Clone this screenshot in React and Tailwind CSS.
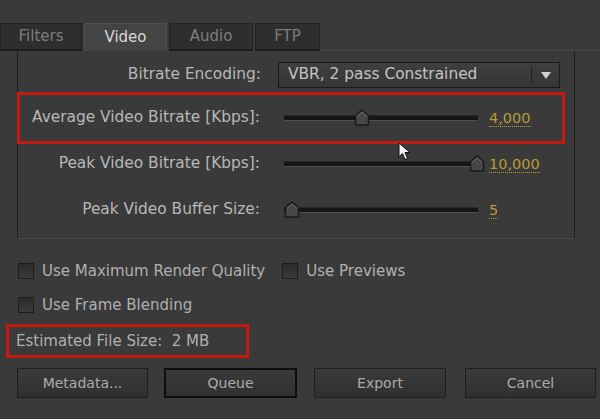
import React from 'react';

const font = { fontFamily: '"DejaVu Sans", "Liberation Sans", sans-serif' };

const tabs = [
  { name: 'Filters', w: 'w-[82px]' },
  { name: 'Video', w: 'w-[83px]', active: true },
  { name: 'Audio', w: 'w-[84px]' },
  { name: 'FTP', w: 'w-[65px]' },
];

// pentagon-shaped slider handle
const Thumb = () => (
  <svg width="16" height="18" viewBox="0 0 16 18" className="absolute top-1/2 -translate-y-1/2 -translate-x-1/2">
    <path d="M1.5 6.5 L8 1 L14.5 6.5 L14.5 16 L1.5 16 Z" fill="#474747" stroke="#1a1a1a" strokeWidth="1.5" />
    <path d="M3 7.5 L8 3.2 L13 7.5" fill="none" stroke="#666" strokeWidth="1" />
  </svg>
);

const Slider = ({ pos }) => (
  <div className="relative w-[194px] h-[16px] flex items-center">
    <div className="w-full h-[6px] bg-[#151515] border-y border-t-[#262626] border-b-[#505050] rounded-[1px]" />
    <div className="absolute top-0 bottom-0" style={{ left: `${pos}px` }}>
      <Thumb />
    </div>
  </div>
);

const Value = ({ children }) => (
  <span className="text-[#b89a36] text-[14.5px] border-b border-dotted border-[#b89a36] leading-[17px]">{children}</span>
);

const SliderRow = ({ label, pos, value, boxed, h }) => (
  <div
    className={`flex items-center ${h} ${boxed ? 'border-[3px] border-[#c41a10] w-[548px] -ml-px' : ''}`}
  >
    <div className={`${boxed ? 'w-[240px]' : 'w-[242px]'} text-right text-[#b8b8b8] text-[15.4px] whitespace-nowrap`}>{label}</div>
    <div className="ml-[24px]">
      <Slider pos={pos} />
    </div>
    <div className="ml-[11px]">
      <Value>{value}</Value>
    </div>
  </div>
);

const Checkbox = ({ label }) => (
  <div className="flex items-center gap-[8px]">
    <div className="w-[16px] h-[16px] border border-[#1d1d1d] bg-gradient-to-b from-[#2c2c2c] to-[#3a3a3a]" />
    <span className="text-[#b0b0b0] text-[15px]">{label}</span>
  </div>
);

const Button = ({ children, focused, w }) => (
  <button
    className={`${w} h-[30px] text-[14px] text-[#ababab] bg-gradient-to-b from-[#3a3a3a] to-[#303030] border ${
      focused ? 'border-[#0e0e0e] border-2' : 'border-[#1e1e1e]'
    }`}
  >
    {children}
  </button>
);

export default function App() {
  return (
    <div className="relative w-[600px] h-[419px] bg-[#3a3a3a] overflow-hidden select-none" style={font}>
      {/* top strip */}
      <div className="h-[23px]" />

      {/* tabs */}
      <div className="flex h-[28px] items-end">
        {tabs.map((t, i) => (
          <div
            key={t.name}
            className={`${t.w} h-[28px] flex items-center justify-center text-[15px] ${i > 0 ? 'ml-[2px]' : ''} ${
              t.active
                ? 'bg-[#444444] text-[#d8d8d8] border-t border-x border-[#505050]'
                : 'bg-[#2e2e2e] text-[#7d7d7d] border-t border-x border-b-2 border-[#232323] border-b-[#1c1c1c]'
            }`}
          >
            {t.name}
          </div>
        ))}
        <div className="flex-1 h-[28px] border-b border-[#4a4a4a]" />
      </div>

      {/* video settings panel */}
      <div className="ml-[17px] w-[558px] h-[188px] border-l border-r border-[#1e1e1e] border-b border-b-[#4a4a4a] pt-[11px] flex flex-col">
        <div className="flex items-center h-[26px]">
          <div className="w-[243px] text-right text-[#b8b8b8] text-[15.4px]">Bitrate Encoding:</div>
          <div className="ml-[17px] w-[282px] h-[26px] flex items-center border border-[#1a1a1a] bg-gradient-to-b from-[#3f3f3f] to-[#353535]">
            <span className="flex-1 pl-[9px] text-[#c4c4c4] text-[15.4px]">VBR, 2 pass Constrained</span>
            <div className="w-px h-[18px] bg-[#222]" />
            <div className="w-[27px] flex justify-center">
              <svg width="10" height="7" viewBox="0 0 10 7">
                <path d="M0 0 H10 L5 7 Z" fill="#cfcfcf" />
              </svg>
            </div>
          </div>
        </div>

        <div className="mt-[4px]">
          <SliderRow boxed h="h-[52px]" label="Average Video Bitrate [Kbps]:" pos={78} value="4,000" />
        </div>
        <SliderRow h="h-[40px]" label="Peak Video Bitrate [Kbps]:" pos={193} value="10,000" />
        <SliderRow h="h-[52px]" label="Peak Video Buffer Size:" pos={8} value="5" />
      </div>

      {/* render options */}
      <div className="pl-[18px] pt-[21px] flex flex-col gap-[11px]">
        <div className="flex items-center gap-[17px]">
          <Checkbox label="Use Maximum Render Quality" />
          <Checkbox label="Use Previews" />
        </div>
        <Checkbox label="Use Frame Blending" />
      </div>

      <div className="ml-[6px] mt-[8px] w-[243px] h-[34px] border-[3px] border-[#c41a10] flex items-center pl-[7px]">
        <span className="text-[#b0b0b0] text-[15px] whitespace-pre">Estimated File Size:  2 MB</span>
      </div>

      {/* dialog buttons */}
      <div className="mt-[10px] ml-[17px] flex items-center">
        <Button w="w-[131px]">Metadata...</Button>
        <div className="ml-[16px]">
          <Button w="w-[133px]" focused>Queue</Button>
        </div>
        <div className="ml-[17px]">
          <Button w="w-[132px]">Export</Button>
        </div>
        <div className="ml-[19px]">
          <Button w="w-[131px]">Cancel</Button>
        </div>
      </div>

      {/* mouse pointer */}
      <svg width="14" height="20" viewBox="0 0 14 20" className="absolute left-[398px] top-[142px]">
        <path d="M1 1 L1 15 L4.5 11.5 L7 17.5 L9.5 16.5 L7 10.5 L12 10.5 Z" fill="#f2f2f2" stroke="#111" strokeWidth="1" />
      </svg>
    </div>
  );
}
